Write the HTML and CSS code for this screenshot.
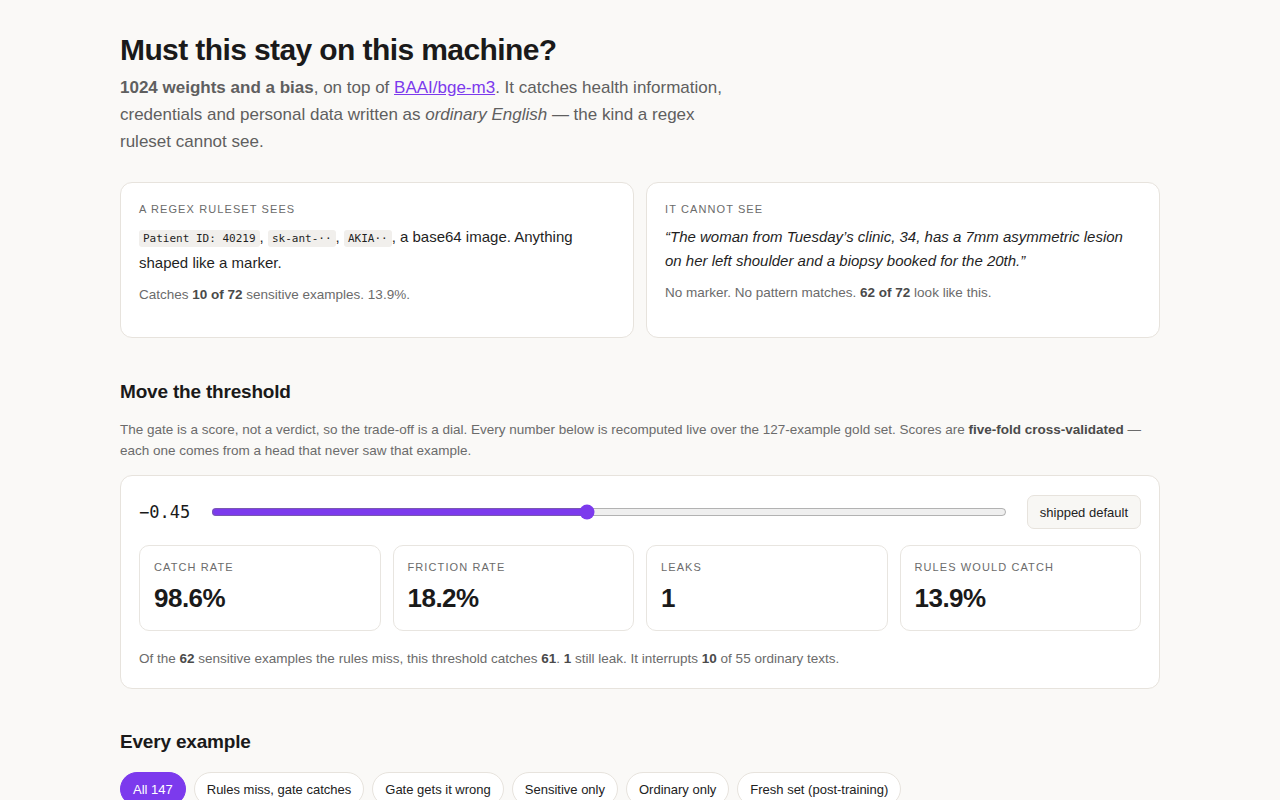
FILE: index.html
```html
<!DOCTYPE html>
<html lang="en">
<head>
    <meta charset="UTF-8">
    <meta name="viewport" content="width=device-width, initial-scale=1.0">
    <title>Must this stay on this machine?</title>
    <link rel="stylesheet" href="styles.css">
</head>
<body>
    <main class="page">
        <h1>Must this stay on this machine?</h1>
        <p class="lede">
            <strong>1024 weights and a bias</strong>, on top of <a href="#">BAAI/bge-m3</a>. It catches health information,
            credentials and personal data written as <em>ordinary English</em> — the kind a regex ruleset cannot see.
        </p>

        <div class="compare">
            <div class="card">
                <div class="label">A regex ruleset sees</div>
                <p class="card-body">
                    <code>Patient ID: 40219</code>, <code>sk-ant-··</code>, <code>AKIA··</code>, a base64 image. Anything shaped like a marker.
                </p>
                <p class="card-note">Catches <strong>10 of 72</strong> sensitive examples. 13.9%.</p>
            </div>
            <div class="card">
                <div class="label">It cannot see</div>
                <p class="card-body quote">
                    “The woman from Tuesday’s clinic, 34, has a 7mm asymmetric lesion on her left shoulder and a biopsy booked for the 20th.”
                </p>
                <p class="card-note">No marker. No pattern matches. <strong>62 of 72</strong> look like this.</p>
            </div>
        </div>

        <h2>Move the threshold</h2>
        <p class="desc">
            The gate is a score, not a verdict, so the trade-off is a dial. Every number below is recomputed live over the 127-example gold set. Scores are <strong>five-fold cross-validated</strong> — each one comes from a head that never saw that example.
        </p>

        <div class="panel">
            <div class="dial-row">
                <span class="dial-value" id="dialValue">−0.45</span>
                <input type="range" class="dial" id="dial" min="-1.3" max="0.5" step="0.01" value="-0.45">
                <button class="btn-default" id="resetDial">shipped default</button>
            </div>

            <div class="metrics">
                <div class="metric">
                    <div class="label">Catch rate</div>
                    <div class="metric-value">98.6%</div>
                </div>
                <div class="metric">
                    <div class="label">Friction rate</div>
                    <div class="metric-value">18.2%</div>
                </div>
                <div class="metric">
                    <div class="label">Leaks</div>
                    <div class="metric-value">1</div>
                </div>
                <div class="metric">
                    <div class="label">Rules would catch</div>
                    <div class="metric-value">13.9%</div>
                </div>
            </div>

            <p class="summary">
                Of the <strong>62</strong> sensitive examples the rules miss, this threshold catches <strong>61</strong>. <strong>1</strong> still leak. It interrupts <strong>10</strong> of 55 ordinary texts.
            </p>
        </div>

        <h2 class="examples-title">Every example</h2>
        <div class="filters">
            <button class="pill active">All 147</button>
            <button class="pill">Rules miss, gate catches</button>
            <button class="pill">Gate gets it wrong</button>
            <button class="pill">Sensitive only</button>
            <button class="pill">Ordinary only</button>
            <button class="pill">Fresh set (post-training)</button>
        </div>
    </main>

    <script>
        const dial = document.getElementById('dial');
        const dialValue = document.getElementById('dialValue');

        function showValue() {
            dialValue.textContent = Number(dial.value).toFixed(2).replace('-', '−');
        }

        dial.addEventListener('input', showValue);

        document.getElementById('resetDial').addEventListener('click', function() {
            dial.value = -0.45;
            showValue();
        });

        // pill filters only toggle the highlight for now
        document.querySelectorAll('.pill').forEach(function(pill) {
            pill.addEventListener('click', function() {
                document.querySelector('.pill.active').classList.remove('active');
                pill.classList.add('active');
            });
        });
    </script>
</body>
</html>
```

FILE: styles.css
```css
body {
    margin: 0;
    background: #faf9f7;
    color: #1a1a1a;
    font-family: "Liberation Sans", Arial, sans-serif;
}

.page {
    width: 1040px;
    margin: 0 auto;
    padding: 32px 0 40px;
}

h1 {
    margin: 0 0 6px;
    font-size: 30px;
    line-height: 36px;
    letter-spacing: -0.02em;
}

h2 {
    margin: 42px 0 15px;
    font-size: 19px;
    line-height: 24px;
    letter-spacing: -0.01em;
}

.lede {
    max-width: 620px;
    margin: 0 0 27px;
    font-size: 17px;
    line-height: 27px;
    color: #5f5f5f;
}

.lede a {
    color: #7c3aed;
}

.compare {
    display: grid;
    grid-template-columns: 1fr 1fr;
    gap: 12px;
}

.card {
    background: #fff;
    border: 1px solid #e7e3dd;
    border-radius: 12px;
    padding: 18px 18px 32px;
}

.label {
    font-size: 11px;
    line-height: 16px;
    letter-spacing: 0.1em;
    text-transform: uppercase;
    color: #6b6b6b;
}

.card-body {
    margin: 8px 0 10px;
    font-size: 15px;
    line-height: 24px;
    color: #1f1f1f;
}

.card-body code {
    font-family: "DejaVu Sans Mono", monospace;
    font-size: 11px;
    background: #f1efec;
    border-radius: 3px;
    padding: 2px 4px;
}

.quote {
    font-style: italic;
}

.card-note {
    margin: 0;
    font-size: 13.5px;
    line-height: 20px;
    color: #6b6b6b;
}

.card-note strong,
.desc strong,
.summary strong {
    color: #4a4a4a;
}

.desc {
    margin: 0 0 14px;
    font-size: 13.5px;
    line-height: 21px;
    color: #6b6b6b;
}

.panel {
    background: #fff;
    border: 1px solid #e7e3dd;
    border-radius: 12px;
    padding: 19px 18px 19px;
}

.dial-row {
    display: flex;
    align-items: center;
    gap: 20px;
}

.dial-value {
    font-family: "DejaVu Sans Mono", monospace;
    font-size: 17px;
    color: #1a1a1a;
    min-width: 52px;
}

.dial {
    flex: 1;
    margin: 0;
    accent-color: #7c3aed;
}

.btn-default {
    height: 34px;
    padding: 0 12px;
    font-family: inherit;
    font-size: 13px;
    color: #222;
    background: #f8f7f4;
    border: 1px solid #e7e3dd;
    border-radius: 7px;
    cursor: pointer;
}

.metrics {
    display: grid;
    grid-template-columns: repeat(4, 1fr);
    gap: 12px;
    margin-top: 16px;
}

.metric {
    border: 1px solid #e8e5e0;
    border-radius: 10px;
    padding: 13px 14px 17px;
}

.metric-value {
    margin-top: 8px;
    font-size: 26px;
    line-height: 30px;
    font-weight: bold;
    letter-spacing: -0.02em;
}

.summary {
    margin: 18px 0 0;
    font-size: 13.5px;
    line-height: 20px;
    color: #6b6b6b;
}

.examples-title {
    margin: 41px 0 18px;
}

.filters {
    display: flex;
    flex-wrap: wrap;
    gap: 8px;
}

.pill {
    height: 34px;
    padding: 0 12px;
    font-family: inherit;
    font-size: 13px;
    color: #222;
    background: #fff;
    border: 1px solid #e7e3dd;
    border-radius: 17px;
    cursor: pointer;
}

.pill.active {
    background: #7c3aed;
    border-color: #7c3aed;
    color: #fff;
}
```
